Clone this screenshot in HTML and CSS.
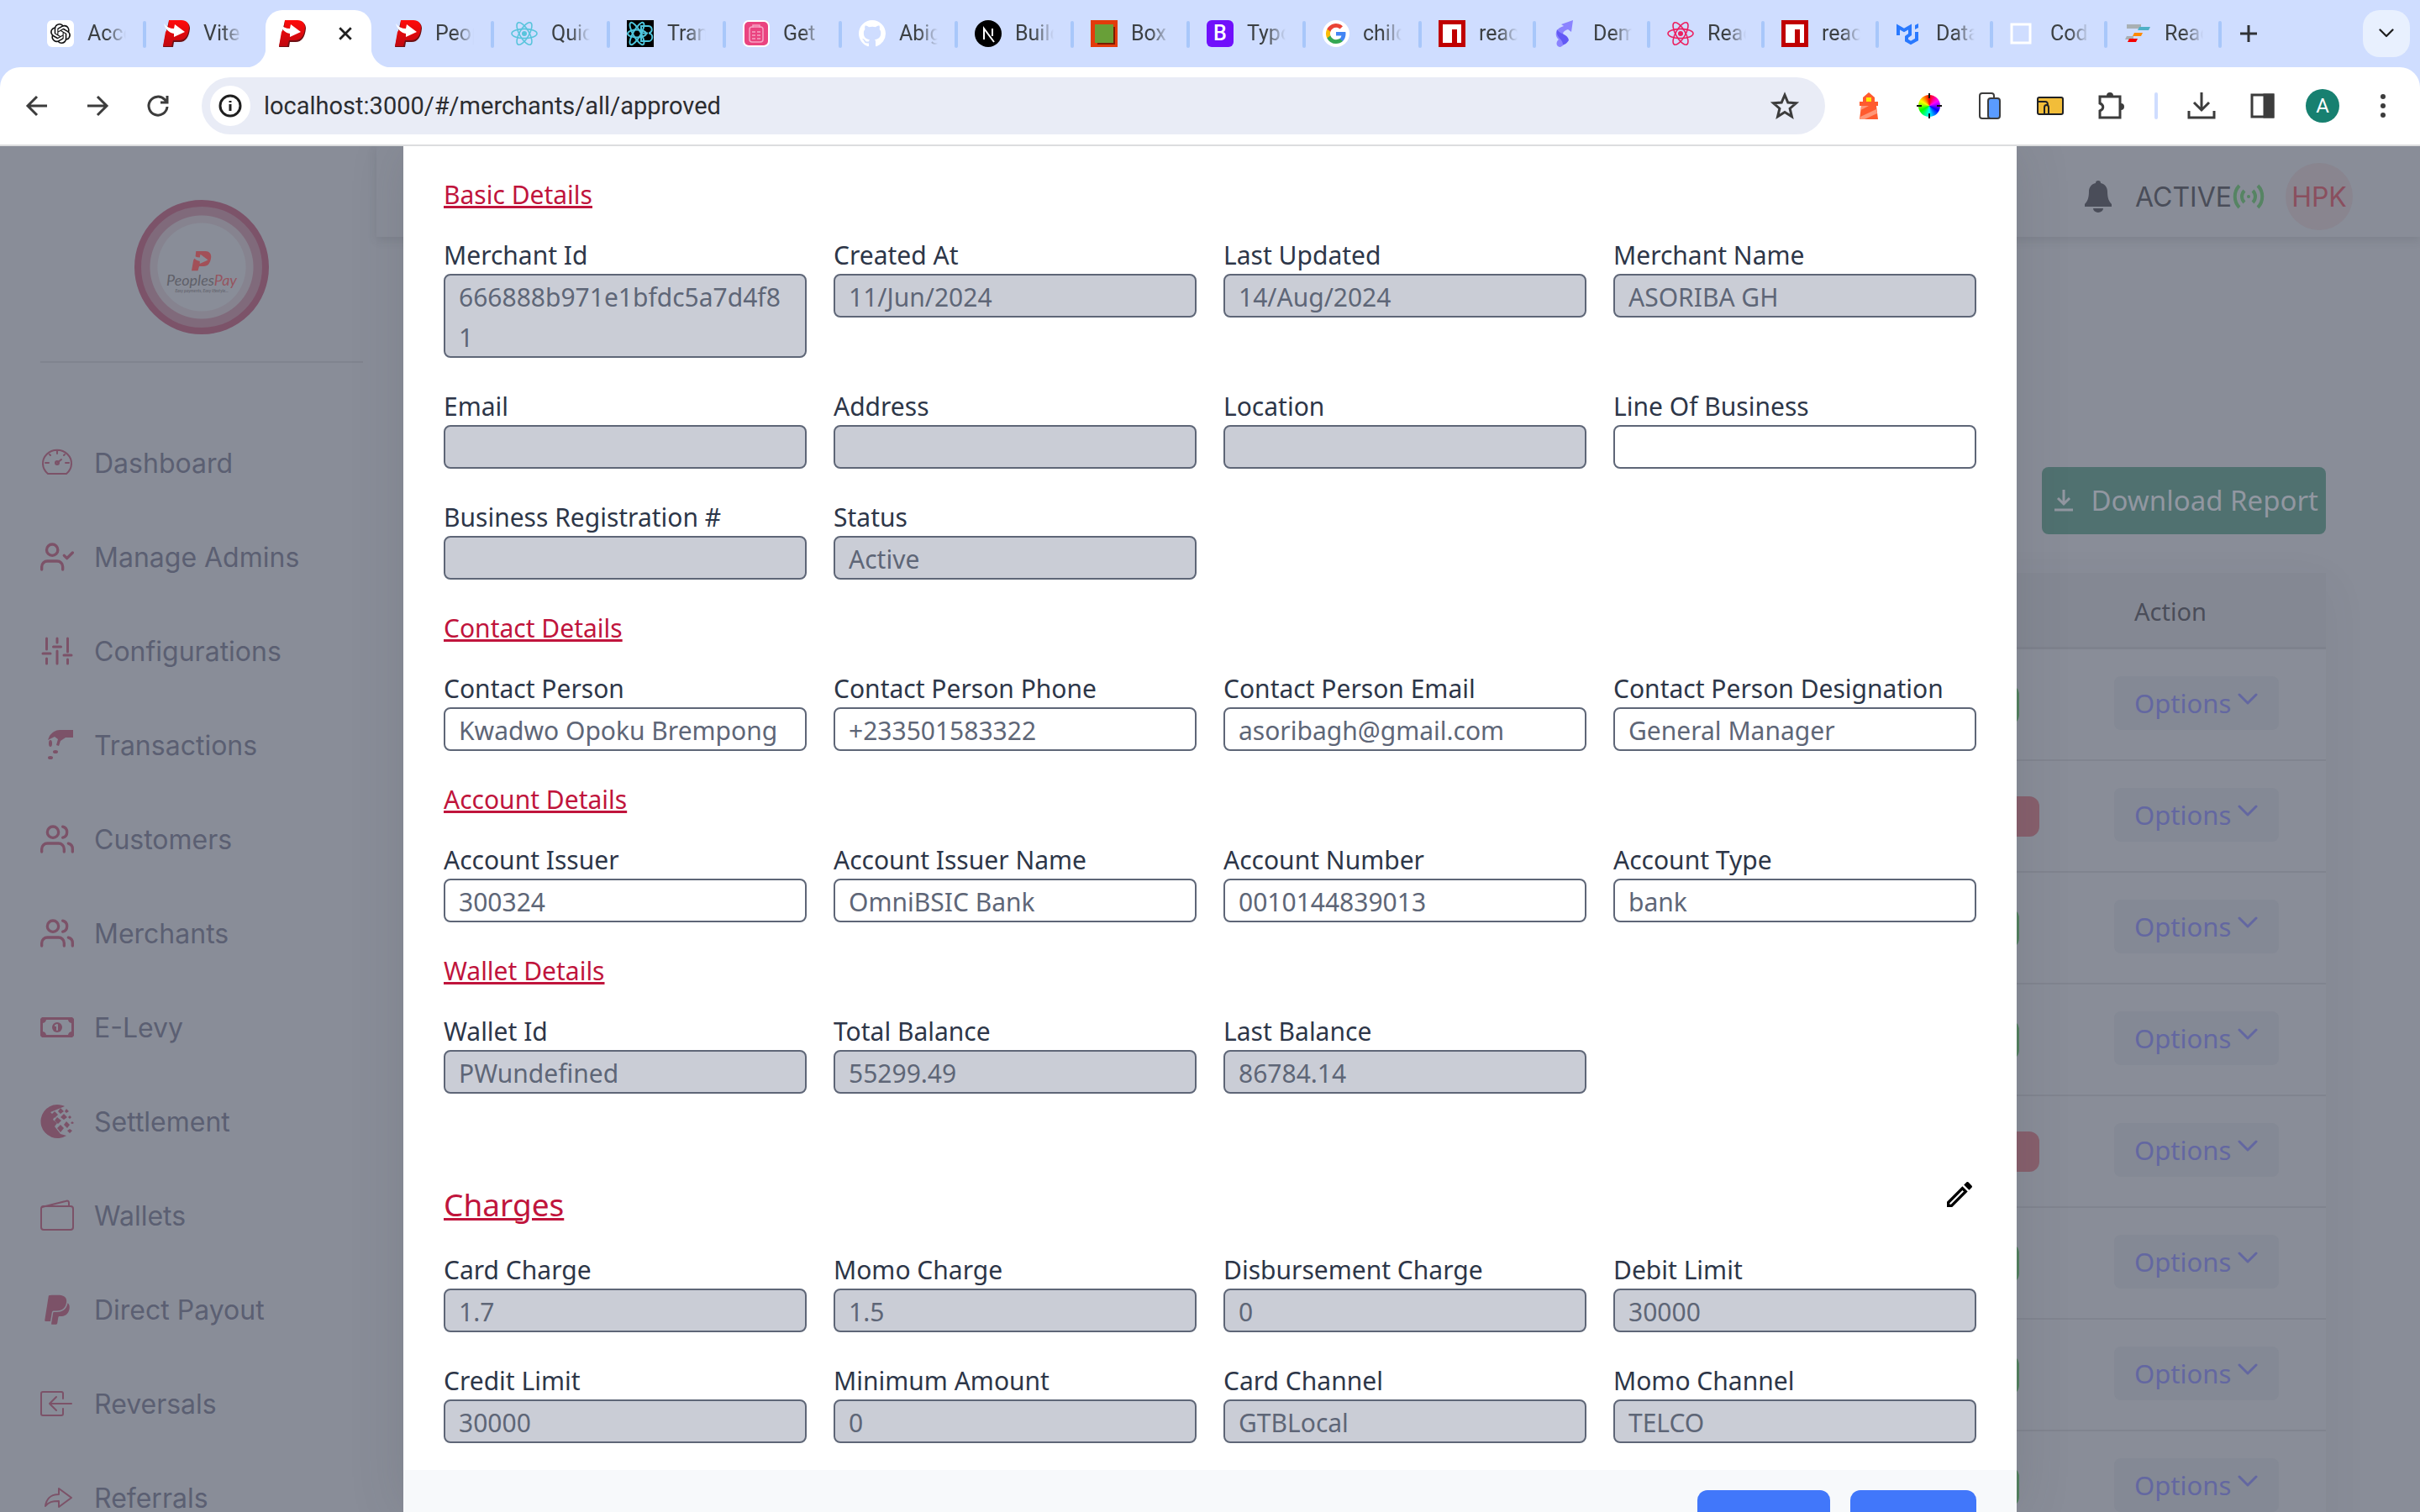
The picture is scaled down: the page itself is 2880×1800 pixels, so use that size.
FILE: index.html
```html
<!DOCTYPE html>
<html lang="en">
<head>
<meta charset="utf-8">
<title>PeoplesPay - Merchants</title>
<link rel="stylesheet" href="styles.css">
</head>
<body>
<svg class="defs" aria-hidden="true">
  <linearGradient id="red" x1="0" y1="0" x2="0" y2="1"><stop offset="0" stop-color="#ff0a0a"/><stop offset="1" stop-color="#c00810"/></linearGradient>
  <symbol id="pay" viewBox="0 0 32 32"><path d="M7 1h16c6 0 9 4 9 9-1 10-5 16-12 16h-7l-1 6H0l4-19z" fill="#6d1014"/><path d="M7 0h15c6 0 9 4 9 9-1 10-5 15-12 15h-7l-2 7H0l3-17 3-4z" fill="url(#red)"/><path d="M1 4c3 4 7 6 12 6l1-5 12 9-13 6v-4C7 15 3 11 1 4z" fill="#fff"/></symbol>
  <symbol id="atom" viewBox="0 0 32 32"><g fill="none" stroke="currentColor" stroke-width="1.600"><ellipse cx="16" cy="16" rx="15" ry="5.600"/><ellipse cx="16" cy="16" rx="15" ry="5.600" transform="rotate(60 16 16)"/><ellipse cx="16" cy="16" rx="15" ry="5.600" transform="rotate(120 16 16)"/></g><circle cx="16" cy="16" r="3" fill="currentColor"/></symbol>
  <symbol id="npm" viewBox="0 0 32 32"><path fill="#c00000" d="M0 0h32v32H0z"/><path fill="#fff" d="M5 5h22v22h-5V11h-6v16H5z"/></symbol>
  <symbol id="users" viewBox="0 0 24 24"><path d="M17 21v-2a4 4 0 0 0-4-4H5a4 4 0 0 0-4 4v2M23 21v-2a4 4 0 0 0-3-3.870M16 3.130a4 4 0 0 1 0 7.750"/><circle cx="9" cy="7" r="4"/></symbol>
  <symbol id="chev" viewBox="0 0 24 16"><path d="M2 2l10 10L22 2" fill="none" stroke="currentColor" stroke-width="3" stroke-linecap="round" stroke-linejoin="round"/></symbol>
</svg>

<div class="browser">
  <div class="tabstrip">
    <div class="tab"><svg class="fav" viewBox="0 0 32 32"><rect width="32" height="32" rx="6" fill="#fff"/><path transform="translate(4 4)" fill="#111" d="M22.282 9.821a5.985 5.985 0 0 0-.516-4.910 6.046 6.046 0 0 0-6.510-2.900A6.065 6.065 0 0 0 4.981 4.182a5.985 5.985 0 0 0-3.998 2.900 6.046 6.046 0 0 0 .743 7.097 5.980 5.980 0 0 0 .511 4.911 6.051 6.051 0 0 0 6.515 2.900A5.985 5.985 0 0 0 13.260 24a6.056 6.056 0 0 0 5.772-4.206 5.989 5.989 0 0 0 3.998-2.900 6.056 6.056 0 0 0-.748-7.073zm-9.022 12.608a4.476 4.476 0 0 1-2.876-1.041l.142-.080 4.778-2.758a.795.795 0 0 0 .393-.681v-6.737l2.020 1.169a.071.071 0 0 1 .038.052v5.583a4.504 4.504 0 0 1-4.495 4.494zm-9.661-4.125a4.471 4.471 0 0 1-.535-3.014l.142.085 4.783 2.758a.771.771 0 0 0 .781 0l5.843-3.369v2.332a.080.080 0 0 1-.033.062L9.740 19.950a4.499 4.499 0 0 1-6.141-1.646zM2.341 7.896a4.485 4.485 0 0 1 2.366-1.973V11.600a.766.766 0 0 0 .388.677l5.814 3.354-2.020 1.169a.076.076 0 0 1-.071 0l-4.830-2.787A4.504 4.504 0 0 1 2.341 7.872zm16.596 3.856L13.104 8.364 15.119 7.200a.076.076 0 0 1 .071 0l4.830 2.791a4.494 4.494 0 0 1-.677 8.104v-5.677a.790.790 0 0 0-.407-.667zm2.011-3.023l-.142-.085-4.774-2.782a.776.776 0 0 0-.785 0L9.409 9.230V6.897a.066.066 0 0 1 .028-.062l4.830-2.787a4.499 4.499 0 0 1 6.680 4.660zM8.307 12.863l-2.020-1.164a.080.080 0 0 1-.038-.057V6.074a4.499 4.499 0 0 1 7.376-3.454l-.142.081L8.704 5.459a.795.795 0 0 0-.393.681zm1.098-2.365l2.602-1.500 2.607 1.500v2.999l-2.597 1.500-2.607-1.500z"/></svg><span>Accou</span></div>
    <div class="tab nosep"><svg class="fav"><use href="#pay"/></svg><span>Vite +</span></div>
    <div class="tab active"><svg class="fav"><use href="#pay"/></svg><button class="close" aria-label="Close tab"><svg width="18" height="18" viewBox="0 0 16 16"><path d="M2 2l12 12M14 2L2 14" stroke="#1f1f1f" stroke-width="2.500"/></svg></button></div>
    <div class="tab"><svg class="fav"><use href="#pay"/></svg><span>Peopl</span></div>
    <div class="tab"><svg class="fav cyan"><use href="#atom"/></svg><span>Quick</span></div>
    <div class="tab"><svg class="fav" viewBox="0 0 32 32"><path d="M0 0h32v32H0z"/><g fill="none" stroke="#4ec5dc" stroke-width="2"><path d="M17 7h8a4 4 0 0 1 1 8.500A4.500 4.500 0 0 1 25 25h-8zM17 15.500h8"/><ellipse cx="12" cy="16" rx="11" ry="4.500"/><ellipse cx="12" cy="16" rx="15" ry="4.500" transform="rotate(60 12 16)"/><ellipse cx="12" cy="16" rx="15" ry="4.500" transform="rotate(120 12 16)"/></g></svg><span>Trans</span></div>
    <div class="tab"><svg class="fav" viewBox="0 0 32 32"><rect width="32" height="32" rx="7" fill="#fff"/><rect x="2" y="2" width="28" height="28" rx="5" fill="#ea4480"/><g fill="none" stroke="#f6a3c2" stroke-width="1.500"><rect x="8" y="8" width="16" height="18" rx="3"/><path d="M12 9V6h8v3M11 14h4M17 14h4M11 18h4M17 18h4M11 22h4M17 22h4"/></g></svg><span>Get s</span></div>
    <div class="tab"><svg class="fav" viewBox="0 0 16 16"><path fill="#fff" d="M8 0C3.580 0 0 3.580 0 8c0 3.540 2.290 6.530 5.470 7.590.4.070.55-.17.55-.38 0-.19-.01-.82-.01-1.490-2.010.37-2.530-.49-2.690-.94-.09-.23-.48-.94-.82-1.130-.28-.15-.68-.52-.01-.53.63-.01 1.080.58 1.230.82.72 1.210 1.870.87 2.330.66.070-.52.28-.87.51-1.070-1.780-.2-3.640-.89-3.640-3.950 0-.87.31-1.590.82-2.150-.08-.2-.36-1.020.08-2.120 0 0 .67-.21 2.200.82.64-.18 1.320-.27 2-.27s1.360.09 2 .27c1.530-1.040 2.200-.82 2.200-.82.44 1.100.16 1.920.08 2.120.51.56.82 1.270.82 2.150 0 3.070-1.870 3.750-3.650 3.950.29.25.54.73.54 1.480 0 1.070-.01 1.930-.01 2.200 0 .21.15.46.55.38A8.010 8.010 0 0 0 16 8c0-4.420-3.580-8-8-8z"/></svg><span>Abiga</span></div>
    <div class="tab"><svg class="fav" viewBox="0 0 32 32"><circle cx="16" cy="16" r="16"/><path d="M11 23V10l12 16M21 10v9" fill="none" stroke="#fff" stroke-width="2"/></svg><span>Build</span></div>
    <div class="tab"><svg class="fav" viewBox="0 0 32 32"><path fill="#e33b0b" d="M0 0h32v32H0z"/><path fill="#7a1c00" d="M8 8h21v21H8z"/><path fill="#689f38" d="M5 5h22v22H5z"/></svg><span>Box s</span></div>
    <div class="tab"><span class="fav bs" aria-hidden="true">B</span><span>Typog</span></div>
    <div class="tab"><svg class="fav" viewBox="0 0 32 32"><circle cx="16" cy="16" r="16" fill="#fff"/><g transform="translate(4 4)"><path fill="#4285f4" d="M23.500 12.300c0-.8-.1-1.600-.2-2.300H12v4.500h6.500a5.500 5.500 0 0 1-2.400 3.600v3h3.900c2.200-2.100 3.500-5.200 3.500-8.800z"/><path fill="#34a853" d="M12 24c3.200 0 6-1.100 8-2.900l-3.900-3c-1.100.7-2.500 1.200-4.100 1.200-3.100 0-5.800-2.100-6.700-5H1.300v3.100A12 12 0 0 0 12 24z"/><path fill="#fbbc05" d="M5.300 14.300a7.200 7.200 0 0 1 0-4.600V6.600h-4a12 12 0 0 0 0 10.800z"/><path fill="#ea4335" d="M12 4.800c1.800 0 3.300.6 4.600 1.800L20 3.200A12 12 0 0 0 1.300 6.600l4 3.100c.9-2.800 3.600-4.900 6.700-4.900z"/></g></svg><span>child</span></div>
    <div class="tab narrow"><svg class="fav"><use href="#npm"/></svg><span>react</span></div>
    <div class="tab narrow"><svg class="fav" viewBox="0 0 32 32"><path fill="#8b83ff" d="M10 5l14-5-2 14-4-3c-6 2-8 5-3 9 4 4-1 10-6 12-5 0-6-6-2-9C2 19 2 10 13 7z"/><path fill="#6259f5" d="M5 11c3 6 13 5 14 13-2 3-4 5-7 5 0-7-9-8-7-18z"/></svg><span>Demo</span></div>
    <div class="tab narrow"><svg class="fav pink"><use href="#atom"/></svg><span>React</span></div>
    <div class="tab narrow"><svg class="fav"><use href="#npm"/></svg><span>react</span></div>
    <div class="tab narrow"><svg class="fav" viewBox="0 0 32 32"><g fill="none" stroke="#2979ff" stroke-width="4"><path d="M3 18V8l7 4 7-4v9l-4 3v4l5 3 7-4v-9"/></g><path fill="#2979ff" d="M23 6l4-2v5l-4 2z"/></svg><span>Data</span></div>
    <div class="tab narrow"><svg class="fav" viewBox="0 0 32 32"><path d="M2 5h22v22H2z" fill="none" stroke="#fff" stroke-width="3"/></svg><span>Code</span></div>
    <div class="tab narrow"><svg class="fav" viewBox="0 0 32 32"><path fill="#a9b0b3" d="M3 5h17v5H3zM3 19h8v4H1z"/><path fill="#4fb0c6" d="M18 8h13l-2 4H16z"/><path fill="#ff8a00" d="M12 15h10l-2 4H10z"/><path fill="#f50000" d="M6 22h10l-2 4H4z"/></svg><span>React</span></div>
    <button class="newtab" aria-label="New tab"><svg width="20" height="20" viewBox="0 0 20 20"><path d="M10 0v20M0 10h20" stroke="#303236" stroke-width="3"/></svg></button>
    <button class="tabsearch" aria-label="Search tabs"><svg width="18" height="12"><use href="#chev"/></svg></button>
  </div>

  <div class="toolbar">
    <button class="tb" aria-label="Back"><svg viewBox="0 0 40 40"><path d="M32 20H9M20 9L9 20l11 11"/></svg></button>
    <button class="tb" aria-label="Forward"><svg viewBox="0 0 40 40"><path d="M8 20h23M20 9l11 11-11 11"/></svg></button>
    <button class="tb" aria-label="Reload"><svg viewBox="0 0 40 40"><path d="M31 21A11 11 0 1 1 28 12.500L31 16M31 8v8h-8"/></svg></button>
    <div class="omnibox">
      <span class="info"><svg width="28" height="28" viewBox="0 0 28 28"><circle cx="14" cy="14" r="12" fill="none" stroke="#1f1f1f" stroke-width="3"/><path d="M14 12v8M14 8v2" stroke="#1f1f1f" stroke-width="3"/></svg></span>
      <input type="text" aria-label="Address" value="localhost:3000/#/merchants/all/approved">
      <button class="tb" aria-label="Bookmark"><svg viewBox="0 0 40 40"><path d="M20 7l3.800 9 9.700.8-7.400 6.400 2.300 9.500L20 27.500l-8.400 5.200 2.300-9.500-7.400-6.400 9.700-.8z" stroke-width="3"/></svg></button>
    </div>
    <button class="tb" aria-label="Lighthouse"><svg viewBox="0 0 40 40" class="flat"><path fill="#ff5b2e" d="M13 10l7-6 7 6v5h4v5h-2l2 16H9l2-16H9v-5h4z"/><path fill="#ffea00" d="M17 10h6v5h-6z"/><path fill="#ff9777" d="M11 20h9l-9.500 5zM10 33l19-9 1 5-15 7H9z"/></svg></button>
    <button class="tb" aria-label="Colour picker"><span class="wheel"><svg viewBox="0 0 40 40" class="cross"><path d="M20 5v6M20 29v6M5 20h6M29 20h6"/></svg></span></button>
    <button class="tb" aria-label="Devices"><svg viewBox="0 0 40 40"><rect x="8" y="5" width="17" height="30" rx="3" stroke-width="2"/><rect x="18" y="11" width="14" height="24" rx="3" fill="#5a9bff" stroke-width="2"/></svg></button>
    <button class="tb" aria-label="Wallet"><svg viewBox="0 0 40 40"><rect x="5" y="10" width="30" height="20" rx="2" fill="#f2bd39" stroke="#202124" stroke-width="2"/><path d="M5 15h9c2 0 3 2 3 4M13 30v-8c0-4 5-4 5 0v8" stroke="#202124" stroke-width="2"/></svg></button>
    <button class="tb" aria-label="Extensions"><svg viewBox="0 0 40 40"><path d="M7 9h24v25H7v-8c5-2 5-7 0-9z" stroke-width="3"/><path d="M15 8a4 4 0 0 1 8 0zM32 17a4 4 0 0 1 0 8z" fill="#3c3c3c" stroke="none"/></svg></button>
    <span class="tbsep"></span>
    <button class="tb" aria-label="Downloads"><svg viewBox="0 0 40 40"><path d="M20 4v20M11 16l9 9 9-9M5 26v8h30v-8"/></svg></button>
    <button class="tb" aria-label="Side panel"><svg viewBox="0 0 40 40"><path d="M8 7h25v26H8z"/><path d="M23 7h10v26H23z" fill="#3c3c3c"/></svg></button>
    <button class="tb avatar" aria-label="Profile">A</button>
    <button class="tb" aria-label="Menu"><svg viewBox="0 0 40 40" class="flat"><g fill="#3c3c3c"><circle cx="20" cy="9" r="3"/><circle cx="20" cy="20" r="3"/><circle cx="20" cy="31" r="3"/></g></svg></button>
  </div>

  <div class="viewport">
    <aside class="sidebar">
      <div class="brand">
        <div class="logo">
          <svg width="24" height="24" viewBox="0 0 32 32"><path d="M7 0h15c6 0 9 4 9 9-1 10-5 15-12 15h-7l-2 7H0l3-17 3-4z" fill="#a25058"/><path d="M1 4c3 4 7 6 12 6l1-5 12 9-13 6v-4C7 15 3 11 1 4z" fill="#898d98"/></svg>
          <b>Peoples<i>Pay</i></b>
          <small>Easy payments, Easy lifestyle...</small>
        </div>
      </div>
      <nav>
        <a href="#dashboard"><svg viewBox="0 0 40 40"><path d="M9 33h22A17 16 0 1 0 9 33zM20 20l5-4M20 6v3M11 10l1 1M29 10l-1 1M6 20h4M30 20h4"/><circle cx="20" cy="20" r="2"/></svg>Dashboard</a>
        <a href="#admins"><svg viewBox="0 0 24 24" class="s24"><path d="M16 21v-2a4 4 0 0 0-4-4H5a4 4 0 0 0-4 4v2M17 11l2 2 4-4"/><circle cx="8.500" cy="7" r="4"/></svg>Manage Admins</a>
        <a href="#config"><svg viewBox="0 0 40 40"><path d="M7.500 5v13M7.500 29v6M3 23h9M20 5v5M20 20v15M15.500 15h9M32.500 5v16M32.500 30v5M28 25h9" stroke-width="3"/></svg>Configurations</a>
        <a href="#transactions"><svg viewBox="0 0 40 40" class="solid"><path d="M39 2v9H30l-6 4-2 6-3-1 2-7-4-3-8 4 2-5c3-4 7-7 12-7z"/><ellipse cx="12" cy="18" rx="2" ry="4"/><ellipse cx="18" cy="28" rx="3" ry="2"/><ellipse cx="12" cy="35" rx="3" ry="2"/></svg>Transactions</a>
        <a href="#customers"><svg class="s24"><use href="#users"/></svg>Customers</a>
        <a href="#merchants"><svg class="s24"><use href="#users"/></svg>Merchants</a>
        <a href="#levy"><svg viewBox="0 0 40 40" class="solid"><path fill-rule="evenodd" d="M2 8h36l2 2v20l-2 2H2l-2-2V10zm5 3a5 5 0 0 1-4 4v10a5 5 0 0 1 4 4h26a5 5 0 0 1 4-4V15a5 5 0 0 1-4-4z"/><circle cx="20" cy="20" r="6"/><path d="M18 18l2-1v6" fill="none" stroke="#898d98" stroke-width="2"/></svg>E-Levy</a>
        <a href="#settlement"><svg viewBox="0 0 40 40" class="solid"><path d="M20 0c4 0 7 1 9 2L12 9l5 5-2 4 5 4-3 4 7 9 7 2A20 20 0 1 1 20 0z"/><path d="M17 8l4 4-4 4-4-4zM24 4l4 4-4 3-3-3zM31 5l3 3-3 2-2-2zM20 15l5 4-4 4-4-4zM28 11l4 4-4 3-4-3zM35 13l2 2-2 2-2-2zM24 24l4 4-4 5-4-5zM31 20l4 4-3 4-4-4zM38 20l2 2-2 1-2-1zM35 29l3 2-3 3-3-3z"/></svg>Settlement</a>
        <a href="#wallets"><svg viewBox="0 0 40 40"><rect x="1" y="9" width="38" height="28" rx="3"/><path d="M2 10L30 3c3-1 4 0 4 2v4"/></svg>Wallets</a>
        <a href="#payout"><svg viewBox="-68 -8 520 520" class="solid"><path d="M111.400 295.900c-3.500 19.200-17.400 108.700-21.500 134-.3 1.800-1 2.500-3 2.500H12.300c-7.600 0-13.100-6.600-12.100-13.900L58.800 46.600c1.500-9.600 10.100-16.900 20-16.900 152.300 0 165.100-3.700 204 11.400 60.100 23.300 65.600 79.500 44 140.300-21.500 62.600-72.500 89.500-140.100 90.300-43.400.7-69.500-7-75.300 24.200zM357.100 152c-1.800-1.300-2.500-1.800-3 1.300-2 11.400-5.100 22.500-8.800 33.600-39.900 113.800-150.500 103.900-204.500 103.900-6.100 0-10.100 3.300-10.900 9.400-22.600 140.400-27.100 169.700-27.100 169.700-1 7.100 3.500 12.900 10.600 12.900h63.500c8.600 0 15.700-6.300 17.400-14.900.7-5.400-1.100 6.100 14.400-91.300 4.600-22 14.300-19.700 29.300-19.700 71 0 126.400-28.800 142.900-112.300 6.500-34.800 4.600-71.400-23.800-92.600z"/></svg>Direct Payout</a>
        <a href="#reversals"><svg viewBox="0 0 40 40"><path d="M27 14V8c0-1-1-2-2-2H3C2 6 1 7 1 8v24c0 1 1 2 2 2h22c1 0 2-1 2-2v-6M37 20H11M19 12l-8 8 8 8"/></svg>Reversals</a>
        <a href="#referrals"><svg viewBox="0 0 40 40"><path d="M22 9l15 11-15 11v-7c-8 0-12 1-16 6 1-8 6-14 16-14z"/></svg>Referrals</a>
      </nav>
    </aside>

    <div class="content">
      <header class="appbar">
        <svg width="32" height="38" viewBox="0 0 32 38"><path fill="#4a4d59" d="M16 0c2 0 3 1 3 3 5 1 8 5 8 10 0 8 2 12 5 15v3H0v-3c3-3 5-7 5-15 0-5 3-9 8-10 0-2 1-3 3-3zM10 33h12a6 5 0 0 1-12 0z"/></svg>
        <span class="state">ACTIVE<svg width="40" height="32" viewBox="0 0 40 32"><g fill="none" stroke="#568463" stroke-width="4"><path d="M9 3C2 10 2 22 9 29M31 3c7 7 7 19 0 26M15 9c-4 4-4 10 0 14M25 9c4 4 4 10 0 14"/></g><circle cx="20" cy="16" r="2" fill="#568463"/></svg></span>
        <span class="initials">HPK</span>
      </header>
      <main>
        <button class="download"><svg width="24" height="28" viewBox="0 0 24 28"><path d="M12 2v16M5 12l7 7 7-7M1 26h22" fill="none" stroke="currentColor" stroke-width="3"/></svg>Download Report</button>
        <table>
          <thead><tr><th class="wide"></th><th class="stat"></th><th class="act">Action</th></tr></thead>
          <tbody>
            <tr><td></td><td><span class="badge on"></span></td><td><button class="options">Options<svg width="24" height="16"><use href="#chev"/></svg></button></td></tr>
            <tr><td></td><td><span class="badge off"></span></td><td><button class="options">Options<svg width="24" height="16"><use href="#chev"/></svg></button></td></tr>
            <tr><td></td><td><span class="badge on"></span></td><td><button class="options">Options<svg width="24" height="16"><use href="#chev"/></svg></button></td></tr>
            <tr><td></td><td><span class="badge on"></span></td><td><button class="options">Options<svg width="24" height="16"><use href="#chev"/></svg></button></td></tr>
            <tr><td></td><td><span class="badge off"></span></td><td><button class="options">Options<svg width="24" height="16"><use href="#chev"/></svg></button></td></tr>
            <tr><td></td><td><span class="badge on"></span></td><td><button class="options">Options<svg width="24" height="16"><use href="#chev"/></svg></button></td></tr>
            <tr><td></td><td><span class="badge on"></span></td><td><button class="options">Options<svg width="24" height="16"><use href="#chev"/></svg></button></td></tr>
            <tr><td></td><td><span class="badge on"></span></td><td><button class="options">Options<svg width="24" height="16"><use href="#chev"/></svg></button></td></tr>
          </tbody>
        </table>
      </main>
    </div>

    <div class="overlay">
      <form class="modal">
        <div class="details">
          <h3>Basic Details</h3>
          <div class="grid">
            <label>Merchant Id<textarea rows="2" disabled>666888b971e1bfdc5a7d4f81</textarea></label>
            <label>Created At<input disabled value="11/Jun/2024"></label>
            <label>Last Updated<input disabled value="14/Aug/2024"></label>
            <label>Merchant Name<input disabled value="ASORIBA GH"></label>
            <label>Email<input disabled></label>
            <label>Address<input disabled></label>
            <label>Location<input disabled></label>
            <label>Line Of Business<input></label>
            <label>Business Registration #<input disabled></label>
            <label>Status<input disabled value="Active"></label>
          </div>
          <h3>Contact Details</h3>
          <div class="grid">
            <label>Contact Person<input value="Kwadwo Opoku Brempong"></label>
            <label>Contact Person Phone<input value="+233501583322"></label>
            <label>Contact Person Email<input value="asoribagh@gmail.com"></label>
            <label>Contact Person Designation<input value="General Manager"></label>
          </div>
          <h3>Account Details</h3>
          <div class="grid">
            <label>Account Issuer<input value="300324"></label>
            <label>Account Issuer Name<input value="OmniBSIC Bank"></label>
            <label>Account Number<input value="0010144839013"></label>
            <label>Account Type<input value="bank"></label>
          </div>
          <h3>Wallet Details</h3>
          <div class="grid">
            <label>Wallet Id<input disabled value="PWundefined"></label>
            <label>Total Balance<input disabled value="55299.49"></label>
            <label>Last Balance<input disabled value="86784.14"></label>
          </div>
          <div class="charges">
            <h2>Charges</h2>
            <button type="button" class="edit" aria-label="Edit charges"><svg width="40" height="40" viewBox="0 0 24 24"><path d="M14.060 9.020l.92.92L5.920 19H5v-.92l9.060-9.060M17.660 3c-.25 0-.51.1-.7.290l-1.830 1.830 3.750 3.750 1.830-1.830a.996.996 0 0 0 0-1.410l-2.340-2.340c-.2-.2-.45-.290-.71-.290zm-3.600 3.190L3 17.250V21h3.750L17.810 9.940l-3.750-3.750z"/></svg></button>
          </div>
          <div class="grid">
            <label>Card Charge<input disabled value="1.7"></label>
            <label>Momo Charge<input disabled value="1.5"></label>
            <label>Disbursement Charge<input disabled value="0"></label>
            <label>Debit Limit<input disabled value="30000"></label>
            <label>Credit Limit<input disabled value="30000"></label>
            <label>Minimum Amount<input disabled value="0"></label>
            <label>Card Channel<input disabled value="GTBLocal"></label>
            <label>Momo Channel<input disabled value="TELCO"></label>
          </div>
        </div>
        <div class="actions">
          <button type="button" class="primary cancel" aria-label="Close"></button>
          <button type="button" class="primary" aria-label="Save"></button>
        </div>
      </form>
    </div>
  </div>
</div>
</body>
</html>
```
FILE: styles.css
```css
* { box-sizing: border-box; }
body { margin: 0; font-family: Inter, "Liberation Sans", sans-serif; }
button { border: 0; padding: 0; background: none; font: inherit; color: inherit; }
.defs { position: absolute; width: 0; height: 0; }
.browser { display: flex; flex-direction: column; height: 100vh; overflow: hidden; background: #cfddff; }

/* tab strip */
.tabstrip { display: flex; height: 80px; padding-left: 34px; padding-right: 12px; font: 25px/32px Roboto, sans-serif; color: #3c4043; }
.tab { position: relative; display: flex; align-items: center; gap: 16px; width: 138px; padding-left: 22px; flex: none; }
.tab.narrow { width: 136px; }
.tab:not(.nosep):not(.active)::after { content: ""; position: absolute; right: -2px; top: 25px; width: 4px; height: 32px; border-radius: 2px; background: #a8c7fa; }
.tab > span:not(.fav) { width: 46px; overflow: hidden; white-space: nowrap; -webkit-mask-image: linear-gradient(90deg, #000 50%, transparent); mask-image: linear-gradient(90deg, #000 50%, transparent); }
.fav { width: 32px; height: 32px; flex: none; }
.cyan { color: #58c4dc; }
.pink { color: #ec1f5f; }
.bs { border-radius: 6px; background: #7010fb; color: #fff; text-align: center; font-weight: 500; }
.tab.active { z-index: 1; }
.tab.active::before { content: ""; position: absolute; z-index: -1; left: -18px; right: -18px; top: 12px; bottom: 0; background:
  radial-gradient(circle at 0 0, transparent 24px, #fff 25px) left bottom / 24px 24px no-repeat,
  radial-gradient(circle at 100% 0, transparent 24px, #fff 25px) right bottom / 24px 24px no-repeat; }
.tab.active::after { content: ""; position: absolute; z-index: -1; left: 6px; right: 6px; top: 12px; bottom: 0; border-radius: 20px 20px 0 0; background: #fff; }
.close { display: flex; margin-left: 22px; }
.newtab { display: flex; align-items: center; padding-left: 24px; }
.tabsearch { display: flex; align-items: center; justify-content: center; width: 56px; height: 56px; margin: 12px 0 0 auto; border-radius: 20px; background: #e8f0fe; color: #1f1f1f; }

/* toolbar */
.toolbar { display: flex; align-items: center; gap: 32px; height: 94px; padding: 0 24px; flex: none; background: #fff; border-radius: 24px 24px 0 0; border-bottom: 2px solid #dcdddf; }
.tb { display: flex; align-items: center; justify-content: center; width: 40px; height: 40px; flex: none; }
.tb svg { width: 40px; height: 40px; flex: none; fill: none; stroke: #3c3c3c; stroke-width: 3; }
.tb svg.flat { stroke: none; }
.omnibox { display: flex; align-items: center; flex: 1; height: 68px; padding: 0 28px 0 10px; border-radius: 34px; background: #e9ecf6; }
.info { display: flex; align-items: center; justify-content: center; width: 48px; height: 48px; border-radius: 50%; background: #fff; }
.omnibox input { flex: 1; border: 0; padding: 0 16px; background: none; font: 29px Roboto, sans-serif; color: #2c2d30; }
.wheel { display: flex; align-items: center; justify-content: center; width: 26px; height: 26px; border-radius: 50%; background: conic-gradient(red, magenta, blue, cyan, lime, yellow, red); }
.tb .cross { stroke: #111; stroke-width: 2; }
.tbsep { width: 4px; height: 32px; border-radius: 2px; background: #cfddff; }
.avatar { border-radius: 50%; background: #178070; color: #fff; font: 24px Roboto, sans-serif; }

/* page behind the dialog */
.viewport { position: relative; display: flex; flex: 1; min-height: 0; overflow: hidden; background: #898d98; }
.sidebar { width: 448px; flex: none; padding: 64px 16px 0 48px; }
.brand { display: flex; justify-content: center; padding-bottom: 32px; border-bottom: 2px solid #80848f; }
.logo { display: flex; flex-direction: column; align-items: center; width: 160px; height: 160px; padding-top: 38px; border: 8px solid #7c5369; border-radius: 50%; background: radial-gradient(circle, #898d98 52px, #86838f 53px 61px, #806a7b 62px); }
.logo svg { flex: none; margin-top: 15px; }
.logo b { font: italic 18px/20px Lato, sans-serif; color: #5f6069; }
.logo i { color: #965560; }
.logo small { font: italic 5px/6px Lato, sans-serif; color: #5f6069; }
nav { display: flex; flex-direction: column; gap: 48px; padding-top: 87px; }
nav a { display: flex; align-items: center; gap: 24px; height: 64px; font-size: 32px; color: #5b5f72; text-decoration: none; }
nav svg { width: 40px; height: 40px; flex: none; fill: none; stroke: #7c5268; stroke-width: 2; stroke-linecap: round; stroke-linejoin: round; }
nav svg.solid { fill: #7c5268; stroke: none; }
.content { flex: 1; min-width: 0; }
.appbar { display: flex; align-items: center; justify-content: flex-end; height: 108px; padding: 12px 80px 0 0; box-shadow: 0 4px 10px rgba(60, 64, 76, .15); font-size: 32px; color: #4a4d59; }
.state { display: flex; align-items: center; margin: 0 24px 0 28px; }
.initials { display: flex; align-items: center; justify-content: center; width: 80px; height: 80px; border-radius: 50%; background: #89858f; color: #8a4f5e; }
main { padding: 274px 112px 0; font-family: "Noto Sans", sans-serif; }
.download { display: flex; align-items: center; justify-content: flex-end; gap: 20px; width: 338px; height: 80px; margin: 0 0 46px auto; padding: 0 9px 2px 0; border-radius: 8px; background: #507170; color: #9297a1; font-size: 33px; white-space: nowrap; }
table { width: 100%; table-layout: fixed; border-collapse: separate; border-spacing: 0; box-shadow: 0 16px 48px rgba(60, 64, 76, .08); }
th { height: 91px; padding: 2px 24px 0 48px; text-align: left; font-size: 29px; font-weight: 400; color: #4a4d59; background: #848893; border-bottom: 3px solid #7e828d; }
td { height: 133px; padding: 0 24px; border-bottom: 2px solid #80848f; }
.stat { width: 216px; }
.act { width: 276px; }
.badge { display: block; height: 48px; border-radius: 12px; }
.on { width: 103px; background: #52805f; }
.off { width: 127px; background: #875f6c; }
.options { display: flex; align-items: center; gap: 8px; width: 196px; height: 64px; margin-bottom: 4px; padding-left: 24px; border-radius: 8px; background: #848995; color: #6367a1; font-size: 31px; }
.options svg { margin-bottom: 8px; }

/* dialog */
.overlay { position: absolute; inset: 0; display: flex; justify-content: center; }
.modal { display: flex; flex-direction: column; width: 100%; max-width: 1920px; background: #fff; box-shadow: 0 0 60px rgba(60, 64, 76, .15); font: 30px/44px "Noto Sans", sans-serif; color: #2d3648; }
.details { flex: none; padding: 32px 48px; }
h2, h3 { margin: 0; padding-top: 4px; font-weight: 400; color: #c0143c; text-decoration: underline; text-decoration-thickness: 3px; }
h3 { margin-bottom: 24px; font-size: 30px; line-height: 44px; }
h2 { font-size: 37px; line-height: 56px; }
.grid { display: grid; grid-template-columns: repeat(4, 1fr); gap: 32px; align-items: start; }
.grid + h3 { margin-top: 32px; }
label { display: block; min-width: 0; padding-top: 4px; }
label input, textarea { display: block; width: 100%; height: 52px; margin: 0; padding: 2px 16px 0; border: 2px solid #5e6677; border-radius: 8px; background: #fff; font: inherit; line-height: 48px; color: #5e6677; resize: none; overflow: hidden; word-break: break-all; }
textarea { height: 100px; }
label :disabled { background: #cacdd6; }
.charges { display: flex; align-items: flex-start; justify-content: space-between; margin: 100px 0 24px; }
.edit { display: flex; color: #000; }
.actions { display: flex; flex: none; justify-content: flex-end; gap: 24px; padding: 24px 48px; background: #f7f9fb; }
.primary { width: 150px; height: 80px; border-radius: 12px; background: #4177fa; }
.cancel { width: 158px; }
```
